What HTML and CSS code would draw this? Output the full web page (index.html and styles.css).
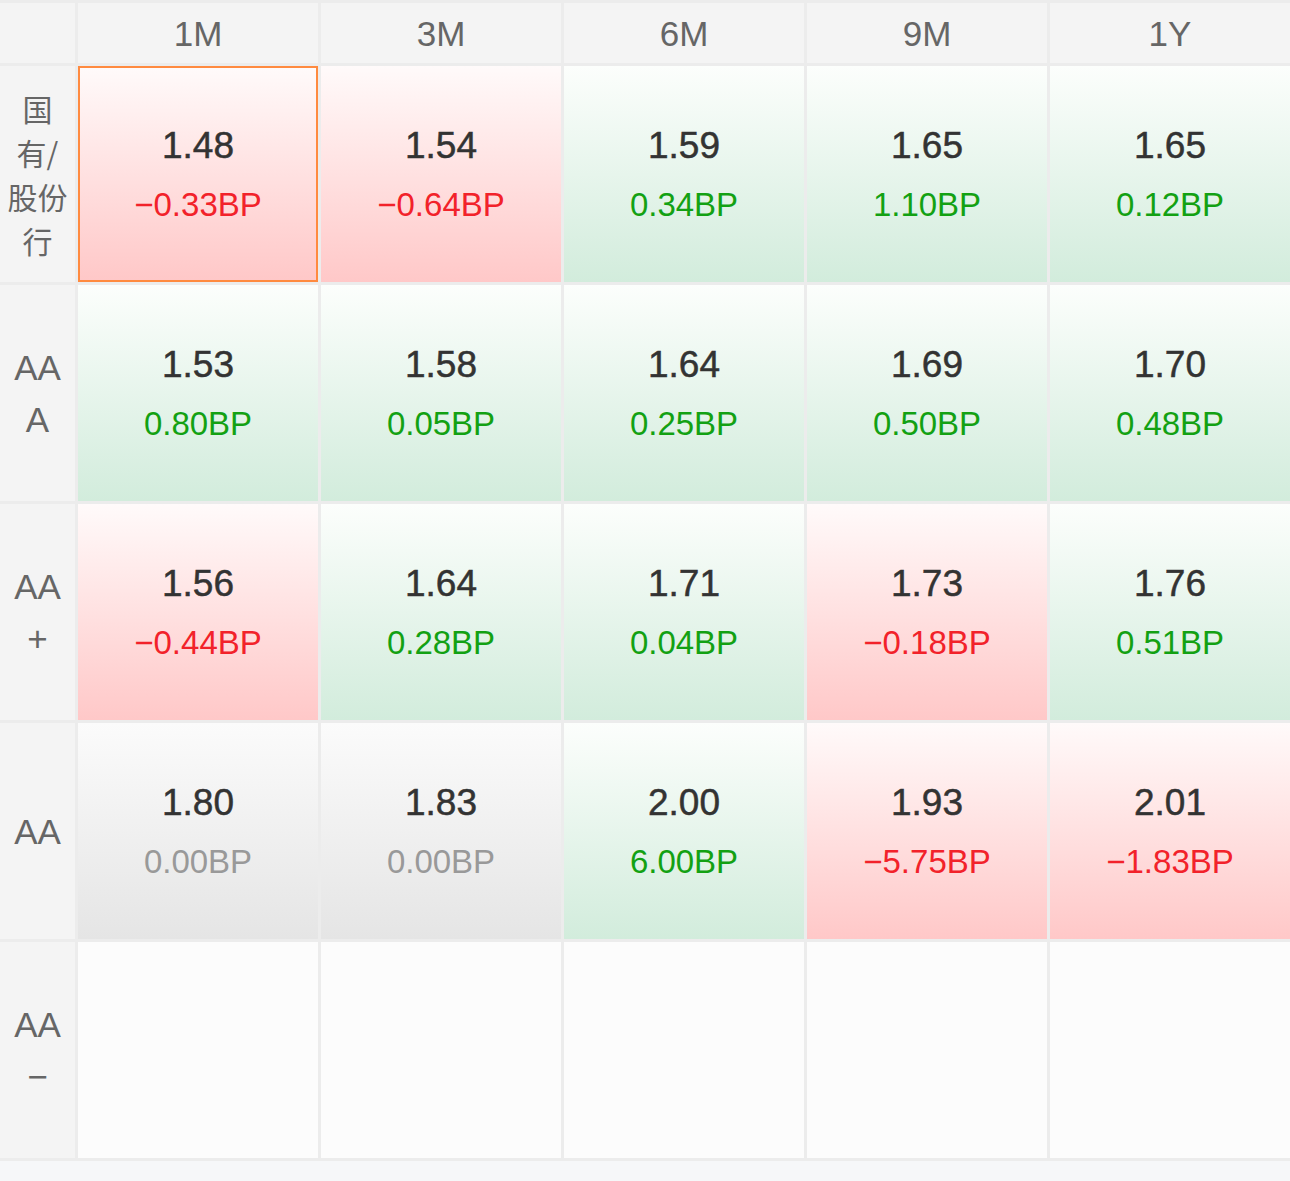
FILE: index.html
```html
<!DOCTYPE html>
<html lang="zh-CN">
<head>
<meta charset="utf-8">
<title>收益率矩阵</title>
<link rel="stylesheet" href="styles.css">
</head>
<body>
<div class="matrix">
  <div class="corner"></div>
  <div class="head">1M</div>
  <div class="head">3M</div>
  <div class="head">6M</div>
  <div class="head">9M</div>
  <div class="head">1Y</div>

  <div class="label cjk">国<br>有/<br>股份<br>行</div>
  <div class="cell down selected"><span class="val">1.48</span><span class="chg">−0.33BP</span></div>
  <div class="cell down"><span class="val">1.54</span><span class="chg">−0.64BP</span></div>
  <div class="cell up"><span class="val">1.59</span><span class="chg">0.34BP</span></div>
  <div class="cell up"><span class="val">1.65</span><span class="chg">1.10BP</span></div>
  <div class="cell up"><span class="val">1.65</span><span class="chg">0.12BP</span></div>

  <div class="label">AA<br>A</div>
  <div class="cell up"><span class="val">1.53</span><span class="chg">0.80BP</span></div>
  <div class="cell up"><span class="val">1.58</span><span class="chg">0.05BP</span></div>
  <div class="cell up"><span class="val">1.64</span><span class="chg">0.25BP</span></div>
  <div class="cell up"><span class="val">1.69</span><span class="chg">0.50BP</span></div>
  <div class="cell up"><span class="val">1.70</span><span class="chg">0.48BP</span></div>

  <div class="label">AA<br>+</div>
  <div class="cell down"><span class="val">1.56</span><span class="chg">−0.44BP</span></div>
  <div class="cell up"><span class="val">1.64</span><span class="chg">0.28BP</span></div>
  <div class="cell up"><span class="val">1.71</span><span class="chg">0.04BP</span></div>
  <div class="cell down"><span class="val">1.73</span><span class="chg">−0.18BP</span></div>
  <div class="cell up"><span class="val">1.76</span><span class="chg">0.51BP</span></div>

  <div class="label">AA</div>
  <div class="cell flat"><span class="val">1.80</span><span class="chg">0.00BP</span></div>
  <div class="cell flat"><span class="val">1.83</span><span class="chg">0.00BP</span></div>
  <div class="cell up"><span class="val">2.00</span><span class="chg">6.00BP</span></div>
  <div class="cell down"><span class="val">1.93</span><span class="chg">−5.75BP</span></div>
  <div class="cell down"><span class="val">2.01</span><span class="chg">−1.83BP</span></div>

  <div class="label">AA<br>−</div>
  <div class="cell empty"></div>
  <div class="cell empty"></div>
  <div class="cell empty"></div>
  <div class="cell empty"></div>
  <div class="cell empty"></div>
</div>
</body>
</html>
```

FILE: styles.css
```css
html, body {
  margin: 0;
  padding: 0;
  background: #f6f7f9;
  font-family: "Liberation Sans", "Noto Sans CJK SC", sans-serif;
}

.matrix {
  display: grid;
  grid-template-columns: 75px repeat(5, 240px);
  grid-template-rows: 60px repeat(5, 216px);
  gap: 3px;
  padding: 3px 0;
  background: #ececec;
  width: 1290px;
}

.corner {
  background: #f4f4f4;
}

.head {
  background: #f4f4f4;
  color: #666;
  font-size: 35px;
  display: flex;
  align-items: center;
  justify-content: center;
  padding-top: 1px;
}

.label {
  background: #f4f4f4;
  color: #666;
  font-size: 35px;
  line-height: 52px;
  display: flex;
  align-items: center;
  justify-content: center;
  text-align: center;
  padding-top: 2px;
}

.label.cjk {
  font-family: "Noto Sans CJK SC", sans-serif;
  font-size: 30px;
  line-height: 44px;
  padding-top: 0;
}

.cell {
  display: flex;
  flex-direction: column;
  align-items: center;
  justify-content: center;
  box-sizing: border-box;
  padding-top: 3px;
}

.val {
  font-size: 37px;
  line-height: 58px;
  color: #333;
  -webkit-text-stroke: 0.5px #333;
}

.chg {
  font-size: 33px;
  line-height: 60px;
}

.up {
  background: linear-gradient(to bottom, #fcfefc, #d2ecdc);
}
.up .chg { color: #13a113; }

.down {
  background: linear-gradient(to bottom, #fffafa, #ffc8c8);
}
.down .chg { color: #f2222a; }

.flat {
  background: linear-gradient(to bottom, #fbfbfb, #e5e5e5);
}
.flat .chg { color: #999; }

.empty {
  background: #fcfcfc;
}

.selected {
  border: 2px solid #ff8a3f;
  padding-top: 3px;
}
```
